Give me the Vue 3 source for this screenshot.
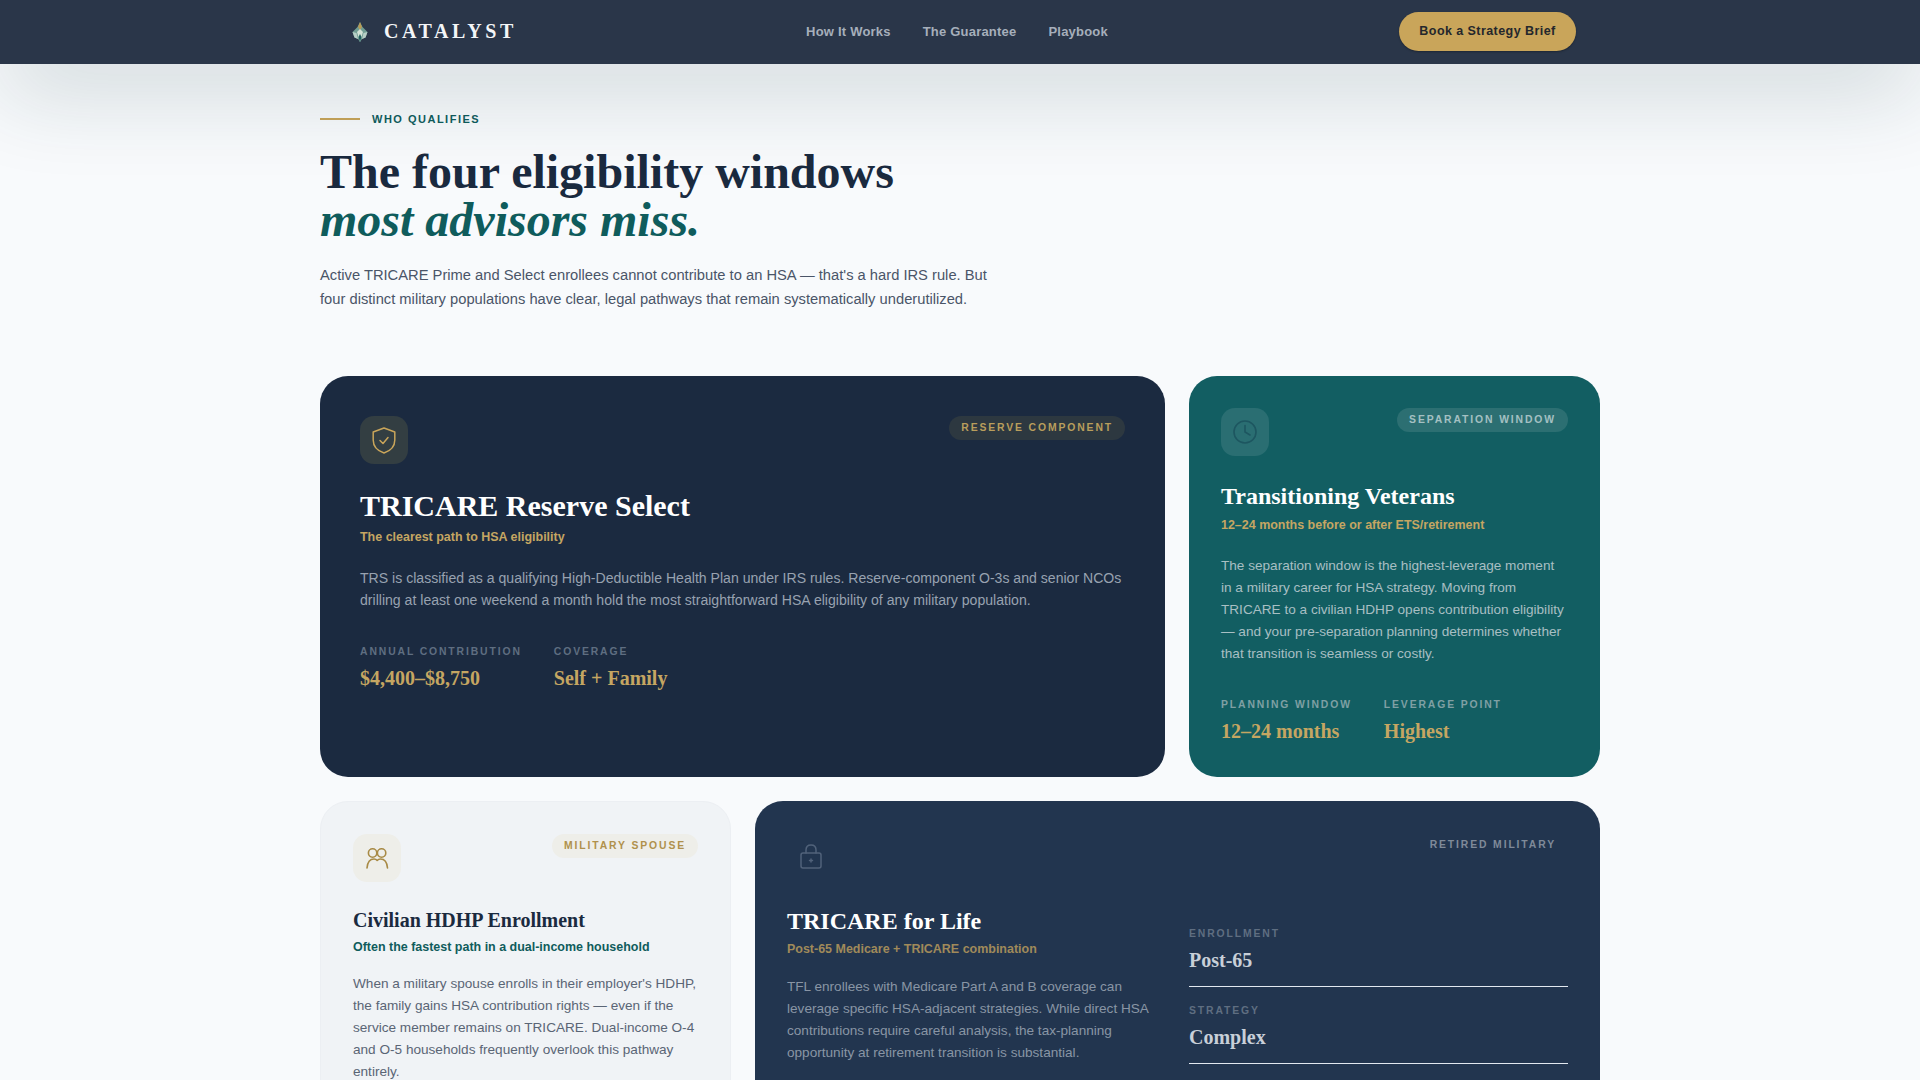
<script setup>
const navLinks = ['How It Works', 'The Guarantee', 'Playbook']
</script>

<template>
  <div class="page">
    <header class="nav">
      <div class="nav-inner">
        <a class="brand">
          <svg class="brand-mark" viewBox="0 0 16 20" width="16" height="20">
            <path d="M8 0 L10.5 5 L15.5 10 L13.5 15.5 L10 17 L8 20 L6 17 L2.5 15.5 L.5 10 L5.5 5 Z" fill="#6f9c92"/>
            <path d="M8 0 L10 5 L8 8 L6 5 Z" fill="#b89a55"/>
            <path d="M8 7 L11 10 L8 20 L5 10 Z" fill="#d3e2d6"/>
            <path d="M.5 10 L2.5 15.5 L6 17 L4.5 11 Z" fill="#b7cfc6"/>
            <path d="M15.5 10 L13.5 15.5 L10 17 L11.5 11 Z" fill="#b7cfc6"/>
            <path d="M8 12 L9.5 15 L8 20 L6.5 15 Z" fill="#1f5f5f"/>
          </svg>
          <span>CATALYST</span>
        </a>
        <nav class="links">
          <a v-for="l in navLinks" :key="l">{{ l }}</a>
        </nav>
        <button class="cta">Book a Strategy Brief</button>
      </div>
    </header>

    <main class="main">
      <div class="eyebrow"><i></i><span>WHO QUALIFIES</span></div>
      <h1>The four eligibility windows<br><em>most advisors miss.</em></h1>
      <p class="lead">Active TRICARE Prime and Select enrollees cannot contribute to an HSA — that's a hard IRS rule. But four distinct military populations have clear, legal pathways that remain systematically underutilized.</p>

      <section class="row row-a">
        <article class="card card-navy">
          <div class="head">
            <div class="icon icon-gold">
              <svg viewBox="0 0 24 27" width="24" height="27" fill="none" stroke="#c9a55a" stroke-width="1.5" stroke-linecap="round" stroke-linejoin="round">
                <path d="M12 1 L22.8 5 V13 C22.8 19.5 18 24 12 26 C6 24 1.2 19.5 1.2 13 V5 Z"/>
                <path d="M8 13.5 L11 16.5 L16 10.5"/>
              </svg>
            </div>
            <span class="tag tag-gold">RESERVE COMPONENT</span>
          </div>
          <h2 class="t-lg">TRICARE Reserve Select</h2>
          <p class="sub gold">The clearest path to HSA eligibility</p>
          <p class="body body-lg">TRS is classified as a qualifying High-Deductible Health Plan under IRS rules. Reserve-component O-3s and senior NCOs drilling at least one weekend a month hold the most straightforward HSA eligibility of any military population.</p>
          <div class="stats stats-a">
            <div><div class="label">ANNUAL CONTRIBUTION</div><div class="value">$4,400–$8,750</div></div>
            <div><div class="label">COVERAGE</div><div class="value">Self + Family</div></div>
          </div>
        </article>

        <article class="card card-teal compact">
          <div class="head">
            <div class="icon icon-white">
              <svg viewBox="0 0 24 24" width="24" height="24" fill="none" stroke="#1d5660" stroke-width="1.6" stroke-linecap="round" stroke-linejoin="round">
                <circle cx="12" cy="12" r="11"/>
                <path d="M12 5.5 V12 L17 15"/>
              </svg>
            </div>
            <span class="tag tag-white">SEPARATION WINDOW</span>
          </div>
          <h2 class="t-md">Transitioning Veterans</h2>
          <p class="sub gold">12–24 months before or after ETS/retirement</p>
          <p class="body">The separation window is the highest-leverage moment in a military career for HSA strategy. Moving from TRICARE to a civilian HDHP opens contribution eligibility — and your pre-separation planning determines whether that transition is seamless or costly.</p>
          <div class="stats stats-b">
            <div><div class="label">PLANNING WINDOW</div><div class="value">12–24 months</div></div>
            <div><div class="label">LEVERAGE POINT</div><div class="value">Highest</div></div>
          </div>
        </article>
      </section>

      <section class="row row-b">
        <article class="card card-light compact">
          <div class="head">
            <div class="icon icon-cream">
              <svg viewBox="0 0 24 24" width="24" height="24" fill="none" stroke="#a88a45" stroke-width="1.6" stroke-linecap="round" stroke-linejoin="round">
                <circle cx="7.6" cy="7" r="4.2"/>
                <circle cx="16.6" cy="7" r="4.2"/>
                <path d="M2 22 C2.5 16 5.5 13 9 13 Q11 13 12.2 14.5 Q13.5 13 15.5 13 C19 13 22 16 22.5 22"/>
              </svg>
            </div>
            <span class="tag tag-cream">MILITARY SPOUSE</span>
          </div>
          <h2 class="t-sm">Civilian HDHP Enrollment</h2>
          <p class="sub teal">Often the fastest path in a dual-income household</p>
          <p class="body">When a military spouse enrolls in their employer's HDHP, the family gains HSA contribution rights — even if the service member remains on TRICARE. Dual-income O-4 and O-5 households frequently overlook this pathway entirely.</p>
        </article>

        <article class="card card-slate compact">
          <div class="head">
            <div class="icon icon-none">
              <svg viewBox="0 -2 24 26" width="24" height="26" fill="none" stroke="#51627a" stroke-width="1.5" stroke-linecap="round" stroke-linejoin="round">
                <rect x="2" y="7" width="20" height="15" rx="2"/>
                <path d="M7 7 V4 C7 1 9 -1 12 -1 C15 -1 17 1 17 4 V7"/>
                <path d="M12 13 V16 M10.5 14.5 H13.5"/>
              </svg>
            </div>
            <span class="tag tag-plain">RETIRED MILITARY</span>
          </div>
          <div class="split">
            <div>
              <h2 class="t-md2">TRICARE for Life</h2>
              <p class="sub gold dim">Post-65 Medicare + TRICARE combination</p>
              <p class="body dim-body">TFL enrollees with Medicare Part A and B coverage can leverage specific HSA-adjacent strategies. While direct HSA contributions require careful analysis, the tax-planning opportunity at retirement transition is substantial.</p>
            </div>
            <div class="side">
              <div class="side-item"><div class="label">ENROLLMENT</div><div class="side-value">Post-65</div></div>
              <div class="side-item"><div class="label">STRATEGY</div><div class="side-value">Complex</div></div>
            </div>
          </div>
        </article>
      </section>
    </main>
  </div>
</template>

<style>
html, body { margin: 0; overflow: hidden; height: 1080px; background: #f8fafc; }
</style>

<style scoped>
.page { font-family: "Liberation Sans", Arial, sans-serif; background: #f8fafc; height: 1080px; overflow: hidden; position: relative; }
.nav { height: 64px; background: #2a3649; box-shadow: 0 24px 90px rgba(20, 55, 60, 0.2); position: relative; z-index: 2; }
.nav-inner { width: 1280px; margin: 0 auto; height: 63px; display: grid; grid-template-columns: 1fr auto 1fr; align-items: center; padding: 0 24px 0 32px; box-sizing: border-box; }
.brand { display: flex; align-items: center; gap: 16px; font-family: "Liberation Serif", serif; font-weight: 700; font-size: 20px; letter-spacing: 0.18em; color: #f4f6f8; }
.brand-mark { display: block; }
.links { display: flex; gap: 32px; margin-left: -14px; }
.links a { color: #a6afbb; font-size: 13px; font-weight: 700; letter-spacing: 0.016em; }
.cta { justify-self: end; width: 177px; height: 39px; padding: 0 0 2px; border: 0; border-radius: 20px; background: #c9a55a; color: #24272c; font: 700 12.5px "Liberation Sans", sans-serif; letter-spacing: 0.035em; box-shadow: 0 1px 2px rgba(0,0,0,.3); }

.main { width: 1280px; margin: 0 auto; padding-top: 47px; }
.eyebrow { display: flex; align-items: center; gap: 12px; height: 16px; }
.eyebrow i { width: 40px; height: 2px; background: #c9a55a; }
.eyebrow span { font-size: 11px; font-weight: 700; letter-spacing: 1.5px; color: #0f5c5c; }
h1 { margin: 21px 0 0; font: 700 48px/48px "Liberation Serif", serif; color: #1a2a3f; }
h1 em { color: #0f5c5c; font-style: italic; }
.lead { margin: 19px 0 0; width: 680px; font-size: 14.72px; line-height: 24px; color: #4a5568; }

.row { display: grid; gap: 24px; }
.row-a { grid-template-columns: 845fr 411fr; margin-top: 65px; height: 401px; }
.row-b { grid-template-columns: 411fr 845fr; margin-top: 24px; height: 400px; }
.card { border-radius: 28px; padding: 40px; box-sizing: border-box; overflow: hidden; }
.compact { padding: 32px; }
.card-navy { background: #1b2a40; }
.card-teal { background: #125e62; }
.card-light { background: #f0f3f6; border: 1px solid #eceff3; }
.card-slate { background: #22354f; }
.head { display: flex; justify-content: space-between; align-items: flex-start; }
.icon { width: 48px; height: 48px; border-radius: 14px; display: flex; align-items: center; justify-content: center; }
.icon-gold { background: #333e42; }
.icon-white { background: #2a6e72; }
.icon-cream { background: #eeeee9; }
.tag { font-size: 10.4px; font-weight: 700; letter-spacing: 0.18em; padding: 6px 12px; border-radius: 20px; line-height: 12px; }
.tag-gold { background: #2d3840; color: #b99e5c; }
.tag-white { background: #2c6f72; color: #a4c0c2; }
.tag-cream { background: #eeeee9; color: #b0914c; }
.tag-plain { color: #7f8a99; }

h2 { margin: 0; font-family: "Liberation Serif", serif; font-weight: 700; }
.t-lg { margin-top: 23px; font-size: 30px; line-height: 38px; color: #fff; }
.t-md { margin-top: 24px; font-size: 24px; line-height: 32px; color: #fff; }
.t-sm { margin-top: 24px; font-size: 20px; line-height: 28px; color: #1a2a3f; }
.t-md2 { margin-top: 0; font-size: 24px; line-height: 32px; color: #fff; }
.sub { margin: 4px 0 0; font-size: 12.48px; font-weight: 700; line-height: 17px; }
.gold { color: #c5a662; }
.teal { color: #0f5c5c; }
.dim { color: #a08a5a; }
.body { margin: 21px 0 0; font-size: 13.6px; line-height: 22px; color: #a8bfc3; }
.card-teal .sub { margin-top: 5px; }
.body-lg { font-size: 14.08px; line-height: 22.4px; color: #98a2b0; }
.card-light .sub { margin-top: 5px; }
.card-light .body { margin-top: 17px; color: #5a6575; }
.dim-body { margin-top: 18px; color: #8995a5; }

.stats { display: flex; gap: 32px; }
.stats-a { margin-top: 33px; }
.stats-b { margin-top: 33px; }
.label { font-size: 10.4px; font-weight: 700; letter-spacing: 0.18em; color: #5f6e81; line-height: 14px; }
.value { margin-top: 5px; font: 700 20px/28px "Liberation Serif", serif; color: #c5a662; }
.card-teal .label { color: #7fa0a4; }

.split { display: grid; grid-template-columns: 378fr 379fr; gap: 24px; margin-top: 24px; }
.side { padding-top: 22px; }
.side-item { border-bottom: 1px solid #e2e8f0; padding-bottom: 12px; margin-bottom: 17px; }
.side-item .label { color: #5f6e81; }
.side-value { margin-top: 5px; font: 700 20px/28px "Liberation Serif", serif; color: #c8cfd8; }
</style>
